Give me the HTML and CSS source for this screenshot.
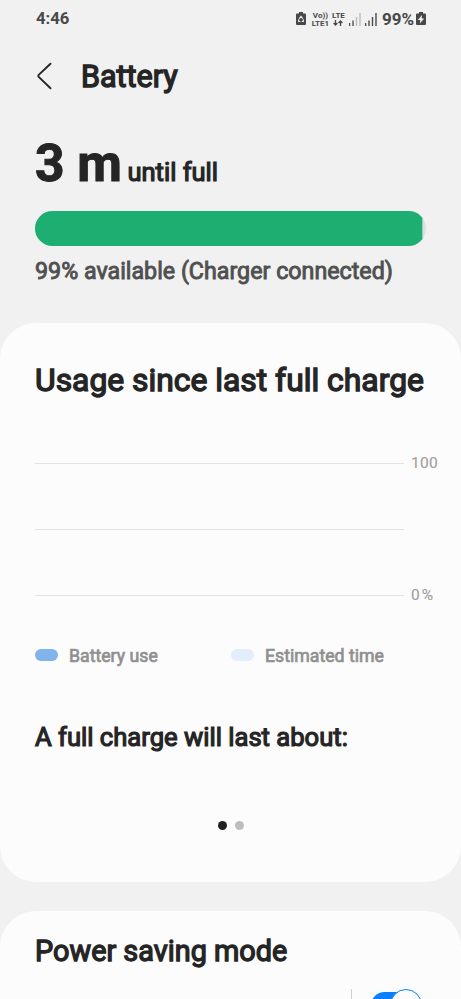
FILE: index.html
```
<!DOCTYPE html>
<html lang="en">
<head>
<meta charset="utf-8">
<title>Battery</title>
<link rel="stylesheet" href="styles.css">
</head>
<body>
<header class="status">
  <span class="clock">4:46</span>
  <div class="indicators">
    <svg class="recycle" width="10" height="14" viewBox="0 0 10 14"><path fill="#484848" d="M3 0h4v1.500h2q1 0 1 1V12q0 1-1 1H1q-1 0-1-1V2.500q0-1 1-1h2z"/><path fill="none" stroke="#f1f1f1" stroke-width="1.100" d="M3.200 6.600 5 4.300l1.800 2.300M7.300 7.300v2.200H5.700M4.300 9.500H2.700V7.300"/></svg>
    <span class="net volte"><span>Vo))</span><span>LTE1</span></span>
    <span class="net lte"><span>LTE</span><svg width="10" height="6" viewBox="0 0 10 6"><path fill="none" stroke="#484848" stroke-width="1.300" d="M2.500 0v5M.6 3l1.900 2 1.900-2M7.500 6V1M5.600 3l1.900-2 1.900 2"/></svg></span>
    <svg class="signal" width="12" height="13" viewBox="0 0 12 13"><path fill="#555" d="M0 10h1.300v3H0zM3.300 7.500h1.400V13H3.300z"/><path fill="#bdbdbd" d="M6.800 4h1.400v9H6.800zM10.300 0h1.400v13h-1.400z"/></svg>
    <svg class="signal last" width="12" height="13" viewBox="0 0 12 13"><path fill="#4c4c4c" d="M0 10h1.300v3H0zM3.300 7.500h1.400V13H3.300zM6.800 4h1.400v9H6.800zM10.300 0h1.400v13h-1.400z"/></svg>
    <span class="percent">99%</span>
    <svg class="charging" width="10" height="14" viewBox="0 0 10 14"><path fill="#484848" d="M3 0h4v1.500h2q1 0 1 1V12q0 1-1 1H1q-1 0-1-1V2.500q0-1 1-1h2z"/><path fill="#f1f1f1" d="M6 3 1.800 8h2.500L3.800 11.500 8.200 6.500H5.700z"/></svg>
  </div>
</header>
<nav class="titlebar">
  <svg class="back" width="16" height="28" viewBox="0 0 16 28"><path fill="none" stroke="#252525" stroke-width="1.900" stroke-linecap="round" stroke-linejoin="round" d="M14.500 1.700 2.700 12.900q-.9 1 0 2L14.500 26.300"/></svg>
  <h1 class="title">Battery</h1>
</nav>
<section class="summary">
  <p class="remaining"><b class="minutes">3 m</b><span class="until">until full</span></p>
  <div class="meter"><div class="level"></div></div>
  <p class="available">99% available (Charger connected)</p>
</section>
<section class="card usage">
  <h2 class="heading">Usage since last full charge</h2>
  <div class="chart">
    <div class="tick"><i class="line"></i><span>100</span></div>
    <div class="tick"><i class="line"></i></div>
    <div class="tick"><i class="line"></i><span class="zero">0%</span></div>
  </div>
  <div class="legend">
    <div class="key"><i class="swatch used"></i><span>Battery use</span></div>
    <div class="key"><i class="swatch estimated"></i><span>Estimated time</span></div>
  </div>
  <h3 class="forecast">A full charge will last about:</h3>
  <div class="pages"><i class="dot current"></i><i class="dot"></i></div>
</section>
<section class="card saving">
  <h2 class="mode">Power saving mode</h2>
  <div class="control"><i class="divider"></i><div class="toggle"><i class="knob"></i></div></div>
</section>
</body>
</html>
```
FILE: styles.css
```
* { box-sizing: border-box; margin: 0; padding: 0; }
html, body { height: 999px; overflow: hidden; }
body { background: #f1f1f1; color: #252525; font-family: Roboto, sans-serif; font-weight: 400; }
svg, i { display: block; flex: none; }
h1, h2, h3 { font-weight: 400; white-space: nowrap; }

.status { display: flex; justify-content: space-between; height: 38px; padding: 0 35px 0 36px; color: #484848; font-size: 16.7px; font-weight: 700; line-height: 38px; }
.indicators { display: flex; align-items: center; }
.recycle { margin-right: 6px; }
.net { display: flex; flex-direction: column; align-items: center; gap: 1px; font-size: 8px; line-height: 7px; font-weight: 700; height: 15px; }
.net span { height: 7px; }
.volte { width: 17px; margin-right: 3px; }
.lte { width: 13px; margin-right: 4px; }
.signal { margin-right: 4px; }
.last { margin-right: 5px; }
.percent { margin-right: 2px; font-size: 17px; }

.titlebar { display: flex; align-items: center; height: 76px; padding-left: 36px; }
.title { margin-left: 29px; padding-top: 2px; font-size: 30.500px; line-height: 76px; -webkit-text-stroke: 1.400px #252525; }

.summary { height: 209px; padding: 19px 35px 0; }
.remaining { display: flex; align-items: baseline; height: 78px; line-height: 62px; white-space: nowrap; }
.minutes { font-size: 51.5px; -webkit-text-stroke: 1px #252525; }
.until { margin-left: 5.500px; font-size: 25.500px; -webkit-text-stroke: 1.200px #252525; }
.meter { height: 35px; border-radius: 18px; overflow: hidden; background: #dedede; }
.level { width: 99.3%; height: 100%; background: #1dae71; border-right: 1px solid #8ed5b5; }
.available { margin-top: 7px; color: #505050; font-size: 23.25px; line-height: 36px; white-space: nowrap; -webkit-text-stroke: .9px #505050; }

.card { background: #fcfcfc; border-radius: 36px; padding: 0 35px; }
.usage { height: 559px; padding-top: 37px; }
.heading { height: 40px; font-size: 31.85px; line-height: 40px; -webkit-text-stroke: 1.4px #252525; }
.chart { display: flex; flex-direction: column; gap: 46px; margin-top: 53px; }
.tick { display: flex; align-items: center; height: 20px; width: 404px; color: #a0a0a0; font-size: 15.500px; line-height: 20px; letter-spacing: .3px; -webkit-text-stroke: .15px #a0a0a0; }
.line { width: 369px; height: 1px; margin-right: 7px; background: #e2e2e2; }
.zero { letter-spacing: 2px; }
.legend { display: grid; grid-template-columns: 196px 1fr; margin-top: 39px; }
.key { display: flex; align-items: center; height: 22px; color: #909090; font-size: 17.700px; line-height: 22px; white-space: nowrap; -webkit-text-stroke: .7px #909090; }
.key span { padding-top: 2px; }
.swatch { width: 23px; height: 12px; margin-right: 11px; border-radius: 6px; }
.used { background: #80b4ea; }
.estimated { background: #e4edfb; }
.forecast { margin-top: 54px; font-size: 25.600px; line-height: 34px; -webkit-text-stroke: 1.200px #252525; }
.pages { display: flex; justify-content: center; gap: 8px; margin-top: 67px; }
.dot { width: 9px; height: 9px; border-radius: 50%; background: #bdbdbd; }
.current { background: #202020; }

.saving { height: 88px; margin-top: 29px; padding-top: 20px; border-radius: 36px 36px 0 0; overflow: hidden; }
.mode { height: 40px; font-size: 28.850px; line-height: 40px; -webkit-text-stroke: 1.300px #252525; }
.control { display: flex; justify-content: flex-end; margin-top: 18px; padding-right: 4px; }
.divider { width: 1px; height: 40px; margin-right: 19px; background: #cecece; }
.toggle { display: flex; justify-content: flex-end; width: 51px; height: 27px; margin-top: 3px; border-radius: 14px; background: #0a81fb; }
.knob { width: 32px; height: 32px; margin-top: -3px; border: 1.500px solid #0a81fb; border-radius: 50%; background: #fcfcfc; }
```
